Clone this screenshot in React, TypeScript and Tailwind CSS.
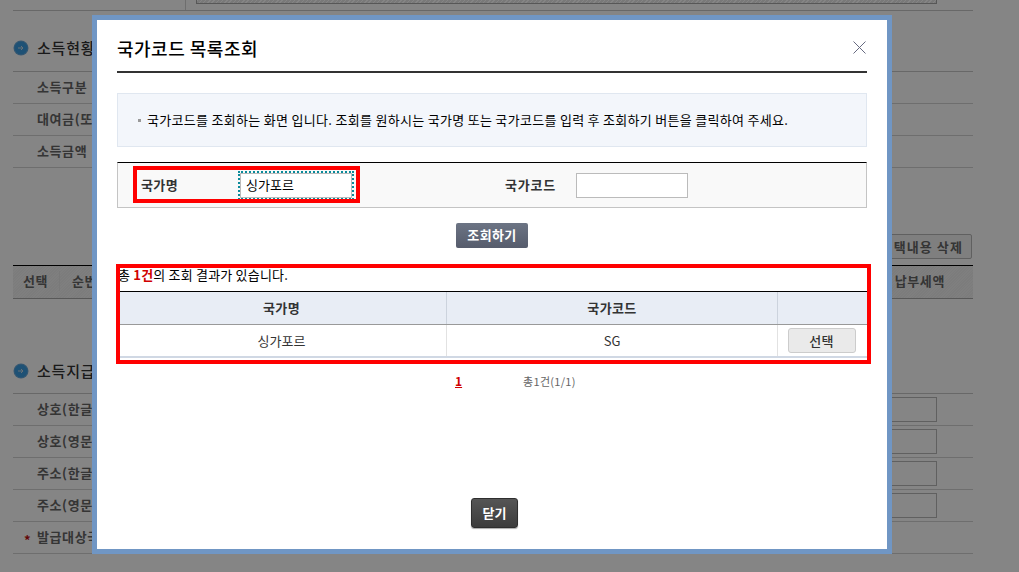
const font = "font-['Noto_Sans_CJK_KR','Liberation_Sans',sans-serif]";

function Bullet() {
  return (
    <svg width="16" height="16" viewBox="0 0 16 16" className="shrink-0">
      <circle cx="8" cy="8" r="7.5" fill="#6aa8d8" />
      <circle cx="8" cy="8" r="6.5" fill="#3a9ce0" />
      <path d="M5 8h5M8 6l2 2-2 2" fill="none" stroke="#c8d8e4" strokeWidth="1" />
    </svg>
  );
}

function SectionTitle({ title, h, pb }: { title: string; h: string; pb: string }) {
  return (
    <div className={`flex items-end ${h} ${pb}`}>
      <div className="flex h-4 items-center gap-2">
        <Bullet />
        <span className="text-[15px] leading-4 font-medium tracking-[0.8px] text-[#333]">{title}</span>
      </div>
    </div>
  );
}

function BgRow({ label, input, star }: { label: string; input?: boolean; star?: boolean }) {
  return (
    <div className="relative flex h-8 items-center border-b border-[#d4d4d4] pl-6">
      {star && <span className="absolute left-[11px] top-[8px] text-[13px] font-bold text-[#c01010]">*</span>}
      <span className="pb-[2px] text-[13px] font-bold tracking-[0.6px] text-[#666]">{label}</span>
      {input && <div className="ml-auto mr-9 h-[25px] w-[300px] border border-[#b8b8b8]" />}
    </div>
  );
}

function BackgroundPage() {
  return (
    <div className="w-[960px] ml-[13px]">
      <div className="relative h-[11px] border-b border-[#c8c8c8]">
        <div className="absolute left-[172px] top-0 h-[10px] border-l border-[#d4d4d4]" />
        <div className="absolute left-[183px] top-0 h-1 w-[741px] border border-t-0 border-[#a8a8a8] bg-[repeating-linear-gradient(135deg,#fff_0,#fff_1px,#e8e8e8_1px,#e8e8e8_3px)]" />
      </div>
      <SectionTitle title="소득현황" h="h-[60px]" pb="pb-[15px]" />
      <div className="border-t border-[#c8c8c8]">
        <BgRow label="소득구분" />
        <BgRow label="대여금(또는 증권)" />
        <BgRow label="소득금액" />
      </div>
      <div className="mt-[66px] flex justify-end pr-px">
        <div className="flex h-[25px] items-center rounded-[2px] border border-[#b8b8b8] bg-[#f4f4f4] px-2 text-[13px] font-bold tracking-[1.1px] text-[#666]">
          선택내용 삭제
        </div>
      </div>
      <div className="mt-[6px] flex h-[34px] items-center border-t border-b border-t-black border-b-[#aaa] bg-[repeating-linear-gradient(135deg,#f4f4f4_0,#f4f4f4_1px,#eee_1px,#eee_2px)] pb-[2px] text-[13px] font-bold tracking-[0.6px] text-[#666]">
        <span className="w-[47px] border-r border-[#e8e8e8] pl-[10px]">선택</span>
        <span className="pl-3">순번</span>
        <span className="ml-auto pr-7">납부세액</span>
      </div>
      <SectionTitle title="소득지급" h="h-[94px]" pb="pb-[14px]" />
      <div className="border-t border-[#c8c8c8]">
        <BgRow label="상호(한글)" input />
        <BgRow label="상호(영문)" input />
        <BgRow label="주소(한글)" input />
        <BgRow label="주소(영문)" input />
        <BgRow label="발급대상국가" star />
      </div>
    </div>
  );
}

function CountryModal() {
  return (
    <div className="absolute left-[92px] top-[15px] h-[539px] w-[800px] border-[5px] border-[#7096c4] bg-white px-5">
      <div className="relative flex h-[53px] items-center border-b-2 border-[#333] pt-[4px]">
        <h1 className="text-[18px] leading-6 font-medium tracking-[0.5px] text-black">국가코드 목록조회</h1>
        <svg width="13" height="13" viewBox="0 0 13 13" className="absolute right-[1px] top-[21px]">
          <path d="M0.5 0.5l12 12M12.5 0.5l-12 12" stroke="#666a80" strokeWidth="1" fill="none" />
        </svg>
      </div>

      <div className="mt-5 flex h-[54px] items-center border border-[#e0e7f0] bg-[#f3f6fb] pl-5 text-[13px] tracking-[0.3px] text-black">
        <span className="mr-[6px] h-[3px] w-[3px] bg-[#999]" />
        국가코드를 조회하는 화면 입니다. 조회를 원하시는 국가명 또는 국가코드를 입력 후 조회하기 버튼을 클릭하여 주세요.
      </div>

      <div className="relative mt-[15px] flex h-[46px] items-center border border-t-black border-x-[#c4c4c4] border-b-[#c4c4c4] bg-[#f9f9f9] pl-[23px] pt-[1px]">
        <label className="w-[99px] pb-[2px] text-[13px] font-bold tracking-[0.4px] text-[#333]">국가명</label>
        <input
          readOnly
          value="싱가포르"
          className="h-[25px] w-[112px] border border-[#bbb] bg-white px-[5px] pb-[2px] text-[13px] text-black outline-2 outline-dotted outline-[#0a8a9a]"
        />
        <label className="ml-[153px] w-[71px] pb-[2px] text-[13px] font-bold tracking-[0.8px] text-[#333]">국가코드</label>
        <input readOnly className="h-[25px] w-[112px] border border-[#bbb] bg-white" />
        <div className="absolute left-[15px] top-[3px] h-[37px] w-[227px] border-4 border-[#ff0000]" />
      </div>

      <button className="mx-auto mt-[15px] flex h-[25px] w-[72px] items-center justify-center rounded-[2px] bg-gradient-to-b from-[#6c7484] to-[#565c6c] pb-[2px] text-[13px] font-bold tracking-[0.4px] text-white">
        조회하기
      </button>

      <div className="relative mt-[19px]">
        <p className="h-[24px] pl-[1px] text-[13px] leading-[16px] tracking-[0.2px] text-black">
          총 <b className="text-[#d00000]">1건</b>의 조회 결과가 있습니다.
        </p>
        <div className="border-t border-black">
          <div className="grid h-[33px] grid-cols-[330px_331px_1fr] border-b border-[#999] bg-[#e8edf5] text-[13px] font-bold tracking-[0.4px] text-[#333]">
            <div className="flex items-center justify-center border-r border-[#ccd3dd]">국가명</div>
            <div className="flex items-center justify-center border-r border-[#ccd3dd]">국가코드</div>
            <div />
          </div>
          <div className="grid h-[33px] grid-cols-[330px_331px_1fr] border-b-2 border-[#d0d8e4] text-[13px] text-[#333]">
            <div className="flex items-center justify-center border-r border-[#e2e2e2]">싱가포르</div>
            <div className="flex items-center justify-center border-r border-[#e2e2e2]">SG</div>
            <div className="flex items-center justify-center pr-[2px]">
              <button className="h-[25px] w-[68px] rounded-[3px] border border-[#ccc] bg-[#eaeaea] text-[13px] font-medium tracking-[0.4px] text-[#333]">선택</button>
            </div>
          </div>
        </div>
        <div className="absolute -left-px -top-[3px] h-[100px] w-[755px] border-4 border-[#ff0000]" />
      </div>

      <div className="mt-[15px] flex h-4 items-center pl-[338px]">
        <a className="text-[12px] font-bold text-[#d00000] underline">1</a>
        <span className="ml-[61px] text-[11px] tracking-[0.3px] text-[#666]">총1건(1/1)</span>
      </div>

      <button className="ml-[354px] mt-[109px] flex h-[30px] w-[47px] items-center justify-center rounded-[3px] border border-[#2e2e2e] bg-gradient-to-b from-[#555] to-[#3c3c3c] text-[13px] font-bold text-white shadow-[0_1px_1px_#aaa]">
        닫기
      </button>
    </div>
  );
}

export default function App() {
  return (
    <div className={`relative h-[572px] w-[1019px] overflow-hidden bg-white ${font}`}>
      <BackgroundPage />
      <div className="absolute inset-0 bg-black/48" />
      <CountryModal />
    </div>
  );
}
